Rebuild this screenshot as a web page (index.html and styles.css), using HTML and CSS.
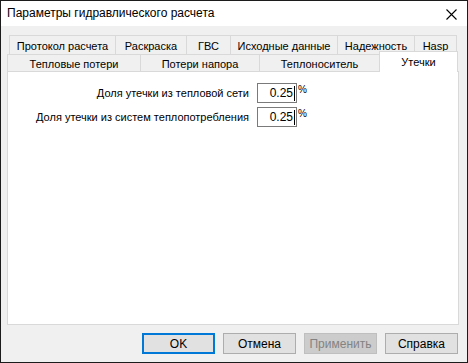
FILE: index.html
```html
<!DOCTYPE html>
<html lang="ru">
<head>
<meta charset="utf-8">
<title>Параметры гидравлического расчета</title>
<link rel="stylesheet" href="styles.css">
</head>
<body>
<div class="window">
  <div class="titlebar">
    <span class="title">Параметры гидравлического расчета</span>
    <span class="close">
      <svg width="11" height="11" viewBox="0 0 11 11"><path d="M0.5 0.5 L10.5 10.5 M10.5 0.5 L0.5 10.5" stroke="#000" stroke-width="1.1" fill="none"/></svg>
    </span>
  </div>
  <div class="body">
    <div class="tabs">
      <div class="tabrow row1">
        <div class="tab t1">Протокол расчета</div>
        <div class="tab t2">Раскраска</div>
        <div class="tab t3">ГВС</div>
        <div class="tab t4">Исходные данные</div>
        <div class="tab t5">Надежность</div>
        <div class="tab t6">Hasp</div>
      </div>
      <div class="tabrow row2">
        <div class="tab r1">Тепловые потери</div>
        <div class="tab r2">Потери напора</div>
        <div class="tab r3">Теплоноситель</div>
        <div class="tab r4 active">Утечки</div>
      </div>
    </div>
    <div class="panel">
      <div class="form">
        <label class="lbl">Доля утечки из тепловой сети</label>
        <div class="field"><div class="input"><span class="val">0.25</span></div><span class="pct">%</span></div>
        <label class="lbl">Доля утечки из систем теплопотребления</label>
        <div class="field"><div class="input"><span class="val">0.25</span></div><span class="pct">%</span></div>
      </div>
    </div>
    <div class="buttons">
      <div class="btn default">OK</div>
      <div class="btn">Отмена</div>
      <div class="btn disabled">Применить</div>
      <div class="btn">Справка</div>
    </div>
  </div>
</div>
</body>
</html>
```

FILE: styles.css
```css
html, body {
  margin: 0;
  padding: 0;
}
body {
  font-family: "Liberation Sans", Arial, sans-serif;
  font-size: 11px;
  color: #000;
  background: #f0f0f0;
}
.window {
  width: 468px;
  height: 363px;
  box-sizing: border-box;
  border: 1px solid #1c1c1c;
  display: flex;
  flex-direction: column;
  background: #f0f0f0;
}
.titlebar {
  height: 25px;
  background: #fff;
  display: flex;
  align-items: center;
  justify-content: space-between;
  padding-left: 6px;
  padding-right: 10px;
  flex: none;
}
.title {
  font-size: 12px;
  line-height: 16px;
  margin-top: -1px;
}
.close {
  display: flex;
  margin-top: 1px;
}
.body {
  flex: 1;
  display: flex;
  flex-direction: column;
  padding: 9px 8px 8px 6px;
}
.tabs {
  display: flex;
  flex-direction: column;
  position: relative;
  z-index: 1;
}
.tabrow {
  display: flex;
}
.row1 {
  padding-left: 2px;
  height: 19px;
}
.row2 {
  height: 17px;
}
.tab {
  box-sizing: border-box;
  border: 1px solid #d9d9d9;
  border-bottom: none;
  margin-right: -1px;
  background: #f0f0f0;
  display: flex;
  align-items: center;
  justify-content: center;
  white-space: nowrap;
  line-height: 14px;
}
.row1 .tab { height: 19px; padding-top: 1px; }
.row2 .tab { height: 17px; padding-top: 1px; }
.t1 { width: 107px; }
.t2 { width: 72px; }
.t3 { width: 45px; }
.t4 { width: 108px; }
.t5 { width: 78px; }
.t6 { width: 43px; }
.r1 { width: 134px; }
.r2 { width: 120px; }
.r3 { width: 121px; }
.r4 { width: 79px; }
.row2 .tab.active {
  background: #fff;
  height: 21px;
  margin-top: -3px;
  margin-bottom: -1px;
  align-items: flex-start;
  padding-top: 3px;
}
.panel {
  width: 452px;
  height: 254px;
  box-sizing: border-box;
  background: #fff;
  border: 1px solid #d9d9d9;
  flex: none;
}
.form {
  display: grid;
  grid-template-columns: 241px auto;
  column-gap: 8px;
  row-gap: 4px;
  padding-top: 11px;
  justify-content: start;
  align-items: center;
}
.lbl {
  text-align: right;
  white-space: nowrap;
}
.field {
  display: flex;
  align-items: flex-start;
}
.input {
  box-sizing: border-box;
  width: 40px;
  height: 20px;
  border: 1px solid #7a7a7a;
  display: flex;
  align-items: center;
  justify-content: flex-end;
  padding-right: 1px;
}
.val {
  font-size: 12px;
  border-right: 1px solid #000;
  padding-right: 1px;
  line-height: 15px;
}
.pct {
  font-size: 10px;
  line-height: 14px;
  letter-spacing: -1px;
  margin-left: 1px;
}
.buttons {
  display: flex;
  justify-content: flex-end;
  gap: 8px;
  margin-top: 8px;
  padding-right: 1px;
}
.btn {
  box-sizing: border-box;
  width: 73px;
  height: 21px;
  background: #e1e1e1;
  border: 1px solid #adadad;
  display: flex;
  align-items: center;
  justify-content: center;
  line-height: 14px;
  font-size: 12px;
}
.btn.default {
  border: 2px solid #0078d7;
}
.btn.disabled {
  background: #cccccc;
  border-color: #bfbfbf;
  color: #838383;
}
```
